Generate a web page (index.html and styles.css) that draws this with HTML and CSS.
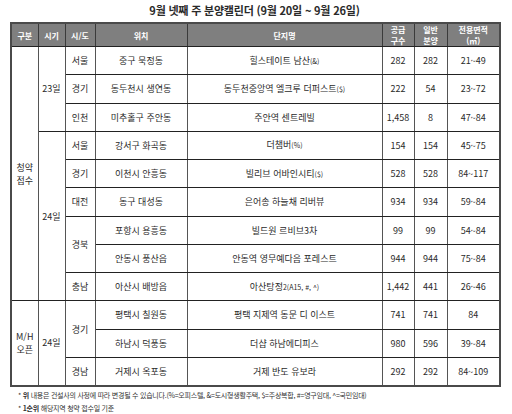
FILE: index.html
```html
<!DOCTYPE html>
<html lang="ko">
<head>
<meta charset="utf-8">
<link rel="stylesheet" href="styles.css">
</head>
<body>
<div class="page">
  <h1 class="title">9월 넷째 주 분양캘린더 (9월 20일 ~ 9월 26일)</h1>
  <table class="cal">
    <colgroup>
      <col class="c1"><col class="c2"><col class="c3"><col class="c4"><col class="c5"><col class="c6"><col class="c7"><col class="c8">
    </colgroup>
    <thead>
      <tr>
        <th>구분</th><th>시기</th><th>시/도</th><th>위치</th><th>단지명</th><th>공급<br>구수</th><th>일반<br>분양</th><th>전용면적<br>(㎡)</th>
      </tr>
    </thead>
    <tbody>
      <tr>
        <td rowspan="9">청약<br>접수</td><td rowspan="3">23일</td><td>서울</td><td>중구 묵정동</td><td>힐스테이트 남산<span class="sm">(&amp;)</span></td><td>282</td><td>282</td><td>21~49</td>
      </tr>
      <tr><td>경기</td><td>동두천시 생연동</td><td>동두천중앙역 엘크루 더퍼스트<span class="sm">($)</span></td><td>222</td><td>54</td><td>23~72</td></tr>
      <tr><td>인천</td><td>미추홀구 주안동</td><td>주안역 센트레빌</td><td>1,458</td><td>8</td><td>47~84</td></tr>
      <tr><td rowspan="6">24일</td><td>서울</td><td>강서구 화곡동</td><td>더챔버<span class="sm">(%)</span></td><td>154</td><td>154</td><td>45~75</td></tr>
      <tr><td>경기</td><td>이천시 안흥동</td><td>빌리브 어바인시티<span class="sm">($)</span></td><td>528</td><td>528</td><td>84~117</td></tr>
      <tr><td>대전</td><td>동구 대성동</td><td>은어송 하늘채 리버뷰</td><td>934</td><td>934</td><td>59~84</td></tr>
      <tr><td rowspan="2">경북</td><td>포항시 용흥동</td><td>빌드원 르비브3차</td><td>99</td><td>99</td><td>54~84</td></tr>
      <tr><td>안동시 풍산읍</td><td>안동역 영무예다음 포레스트</td><td>944</td><td>944</td><td>75~84</td></tr>
      <tr><td>충남</td><td>아산시 배방읍</td><td>아산탕정<span class="sm">2(A15, #, ^)</span></td><td>1,442</td><td>441</td><td>26~46</td></tr>
      <tr><td rowspan="3">M/H<br>오픈</td><td rowspan="3">24일</td><td rowspan="2">경기</td><td>평택시 칠원동</td><td>평택 지제역 동문 디 이스트</td><td>741</td><td>741</td><td>84</td></tr>
      <tr><td>하남시 덕풍동</td><td>더샵 하남에디피스</td><td>980</td><td>596</td><td>39~84</td></tr>
      <tr><td>경남</td><td>거제시 옥포동</td><td>거제 반도 유보라</td><td>292</td><td>292</td><td>84~109</td></tr>
    </tbody>
  </table>
  <p class="note">* <b>위</b> 내용은 건설사의 사정에 따라 변경될 수 있습니다.(%=오피스텔, &amp;=도시형생활주택, $=주상복합, #=영구임대, ^=국민임대)</p>
  <p class="note">* <b>1순위</b> 해당지역 청약 접수일 기준</p>
</div>
</body>
</html>
```
FILE: styles.css
```css
html, body {
  margin: 0;
  padding: 0;
  background: #ffffff;
}
body {
  font-family: "Noto Sans CJK KR", "Noto Sans", sans-serif;
  color: #2a2a2a;
}
.page {
  width: 512px;
  height: 414px;
  padding: 0 0 0 10px;
  box-sizing: border-box;
}
.title {
  margin: 0;
  height: 22px;
  line-height: 21px;
  font-size: 11px;
  font-weight: bold;
  text-align: center;
  width: 489px;
  color: #2a2a2a;
  letter-spacing: -0.2px;
}
.cal {
  border-collapse: collapse;
  table-layout: fixed;
  width: 489px;
  border: 2px solid #4a4a4a;
  font-size: 9px;
}
.c1 { width: 27px; }
.c2 { width: 27px; }
.c3 { width: 30px; }
.c4 { width: 92px; }
.c5 { width: 195px; }
.c6 { width: 32px; }
.c7 { width: 33px; }
.c8 { width: 53px; }
.cal th, .cal td {
  padding: 0;
  text-align: center;
  vertical-align: middle;
  border-top: 1px solid #222;
  border-bottom: 1px solid #222;
  border-left: 1px solid #555;
  border-right: 1px solid #555;
  overflow: hidden;
  white-space: nowrap;
}
.cal thead tr { height: 23px; }
.cal th {
  background: #7f7f7f;
  color: #ffffff;
  font-weight: bold;
  font-size: 8px;
  line-height: 11px;
  border-left: 1px solid #3a3a3a;
  border-right: 1px solid #3a3a3a;
}
.cal tbody tr { height: 28.25px; }
.cal td { line-height: 13px; }
.sm { font-size: 7px; }
.note {
  margin: 0;
  padding-left: 8px;
  font-size: 7px;
  line-height: 13px;
  color: #333;
  white-space: nowrap;
  letter-spacing: -0.25px;
}
.note:first-of-type { margin-top: 2px; }
```
